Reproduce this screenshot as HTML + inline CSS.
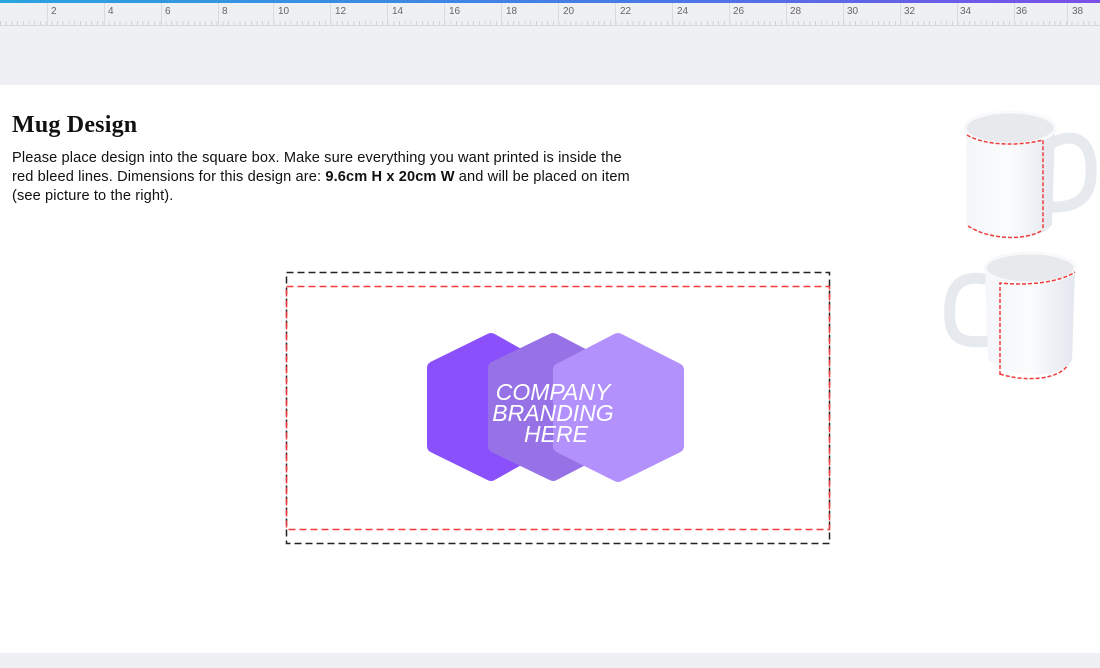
<!DOCTYPE html>
<html><head><style>
*{margin:0;padding:0;box-sizing:border-box}
body{width:1100px;height:668px;overflow:hidden;background:#eff0f3;font-family:"Liberation Sans",sans-serif;position:relative}
.topline{position:absolute;left:0;top:0;width:1100px;height:3px;background:linear-gradient(90deg,#2aa4df,#4a78e6 60%,#7b4fe8)}
.ruler{position:absolute;left:0;top:3px;width:1100px;height:23px;border-bottom:1px solid #d6d8dd;background:#eff0f3}
.ruler span{position:absolute;top:3px;font-size:10px;color:#666}
.ruler i{position:absolute;top:0;width:1px;height:23px;background:#d9dbe0}
.ticks{position:absolute;left:0;top:18px;width:1100px;height:4px;background:repeating-linear-gradient(90deg,#d0d3d8 0 1px,transparent 1px 5.7px)}
.page{position:absolute;left:0;top:85px;width:1100px;height:568px;background:#fff}
h1{position:absolute;left:12px;top:27px;font-family:"Liberation Serif",serif;font-size:24px;font-weight:bold;color:#111;letter-spacing:0.2px}
p{position:absolute;left:12px;top:64px;white-space:nowrap;font-size:14.6px;line-height:19px;color:#111;letter-spacing:0.12px}
</style></head><body>
<div class="topline"></div>
<div class="ruler">
<div class="ticks"></div>
<i style="left:47px"></i><i style="left:104px"></i><i style="left:161px"></i><i style="left:218px"></i><i style="left:273px"></i><i style="left:330px"></i><i style="left:387px"></i><i style="left:444px"></i><i style="left:501px"></i><i style="left:558px"></i><i style="left:615px"></i><i style="left:672px"></i><i style="left:729px"></i><i style="left:786px"></i><i style="left:843px"></i><i style="left:900px"></i><i style="left:957px"></i><i style="left:1014px"></i><i style="left:1067px"></i>
<span style="left:51px">2</span><span style="left:108px">4</span><span style="left:165px">6</span><span style="left:222px">8</span><span style="left:278px">10</span><span style="left:335px">12</span><span style="left:392px">14</span><span style="left:449px">16</span><span style="left:506px">18</span><span style="left:563px">20</span><span style="left:620px">22</span><span style="left:677px">24</span><span style="left:733px">26</span><span style="left:790px">28</span><span style="left:847px">30</span><span style="left:904px">32</span><span style="left:960px">34</span><span style="left:1016px">36</span><span style="left:1072px">38</span>
</div>
<div class="page">
<h1>Mug Design</h1>
<p>Please place design into the square box. Make sure everything you want printed is inside the<br>red bleed lines. Dimensions for this design are: <b>9.6cm H x 20cm W</b> and will be placed on item<br>(see picture to the right).</p>
</div>
<svg width="1100" height="668" style="position:absolute;left:0;top:0">
<defs>
<linearGradient id="mg" x1="0" x2="1"><stop offset="0" stop-color="#f4f6f9"/><stop offset="0.5" stop-color="#fbfcfd"/><stop offset="1" stop-color="#e3e7ee"/></linearGradient>
</defs>
<rect x="286.5" y="272.5" width="543" height="271" fill="none" stroke="#222" stroke-width="1.5" stroke-dasharray="7 4"/>
<rect x="286.5" y="286.5" width="543" height="243" fill="none" stroke="#f03c3c" stroke-width="1.5" stroke-dasharray="7 4"/>
<g stroke-linejoin="round" stroke-width="14">
<polygon points="491,340 541,368 541,446 491,474 434,446 434,368" fill="#8a50fb" stroke="#8a50fb"/>
<polygon points="553,340 607,368 607,446 553,474 495,446 495,368" fill="#9672e6" stroke="#9672e6"/>
<polygon points="618,340 677,370 677,446 618,475 560,446 560,370" fill="#b291fc" stroke="#b291fc"/>
</g>
<g font-family="Liberation Sans,sans-serif" font-style="italic" font-size="23" fill="#fff" text-anchor="middle">
<text x="553" y="400">COMPANY</text><text x="553" y="421">BRANDING</text><text x="556" y="442">HERE</text>
</g>
<path d="M1048,145 C1075,130 1093,140 1091,175 C1090,203 1070,208 1048,207" fill="none" stroke="#e6e9ee" stroke-width="11"/>
<path d="M966,127 L967,225 C985,244 1035,244 1052,225 L1055,127 Z" fill="url(#mg)"/>
<ellipse cx="1010" cy="128" rx="45" ry="16" fill="#e7e9ed" stroke="#f8f9fa" stroke-width="3"/>
<path d="M967,135 C985,146 1020,146 1043,140 L1043,228" fill="none" stroke="#f03c3c" stroke-dasharray="4 2" stroke-width="1.5"/>
<path d="M968,226 C990,240 1025,241 1043,230" fill="none" stroke="#f03c3c" stroke-dasharray="4 2" stroke-width="1.5"/>
<path d="M990,280 C955,272 948,292 950,320 C952,343 970,343 990,341" fill="none" stroke="#e6e9ee" stroke-width="11"/>
<path d="M985,268 L988,360 C1010,380 1060,380 1072,360 L1075,268 Z" fill="url(#mg)"/>
<ellipse cx="1030" cy="268" rx="45" ry="15" fill="#e7e9ed" stroke="#f8f9fa" stroke-width="3"/>
<path d="M1000,375 L1000,283 C1030,286 1060,282 1075,272" fill="none" stroke="#f03c3c" stroke-dasharray="4 2" stroke-width="1.5"/>
<path d="M1000,374 C1025,382 1058,380 1068,365" fill="none" stroke="#f03c3c" stroke-dasharray="4 2" stroke-width="1.5"/>
</svg>
</body></html>
